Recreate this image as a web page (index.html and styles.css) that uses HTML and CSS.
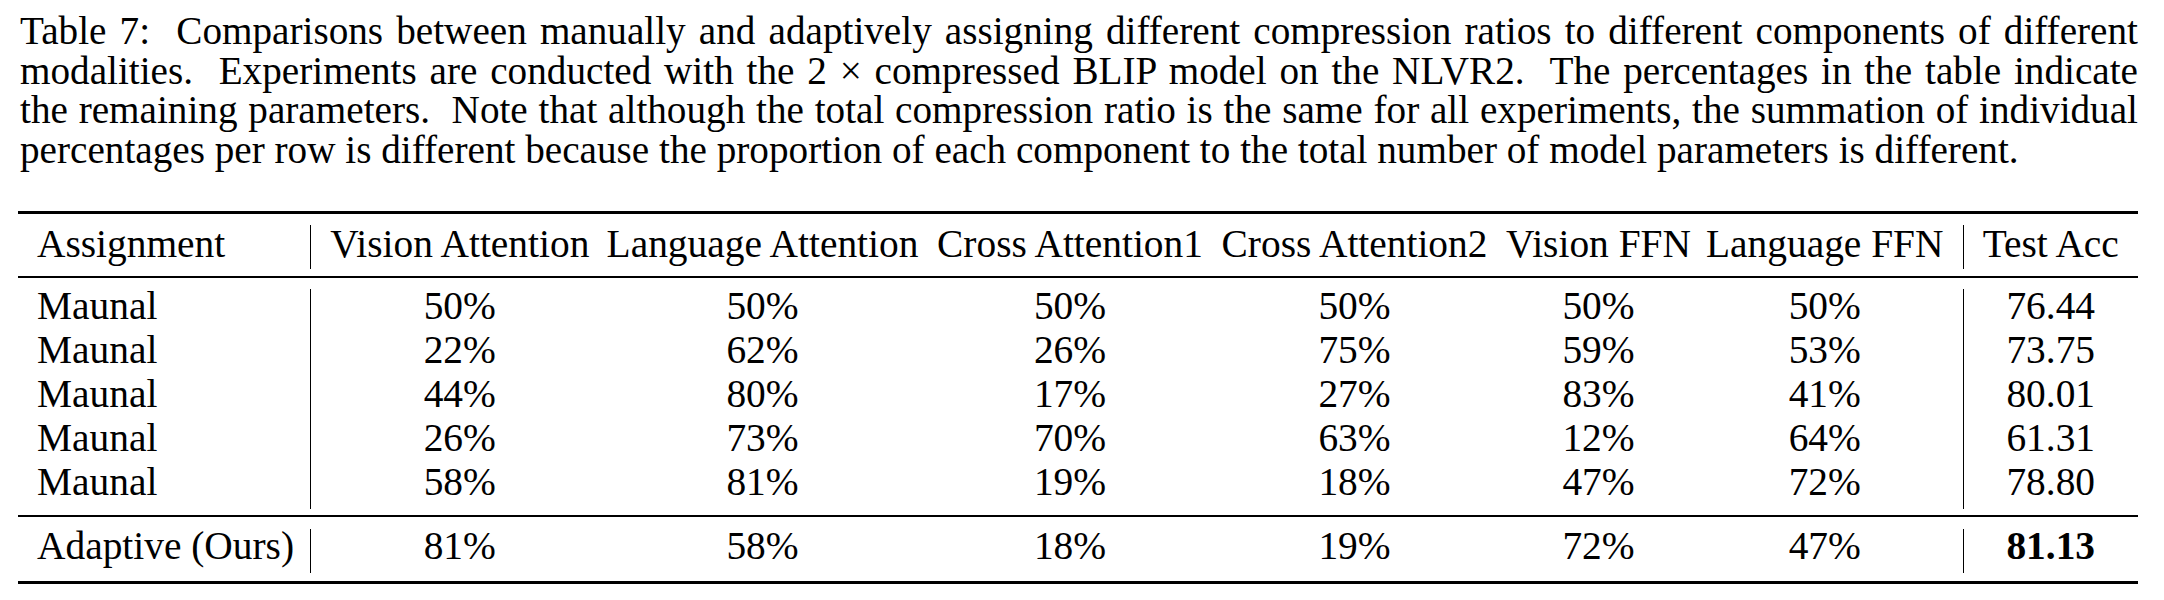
FILE: index.html
```html
<!DOCTYPE html>
<html>
<head>
<meta charset="utf-8">
<link rel="stylesheet" href="styles.css">
</head>
<body>
<div class="page">
  <p class="caption">
    <span class="line just">Table 7:&nbsp; Comparisons between manually and adaptively assigning different compression ratios to different components of different</span>
    <span class="line just">modalities.&nbsp; Experiments are conducted with the 2 × compressed BLIP model on the NLVR2.&nbsp; The percentages in the table indicate</span>
    <span class="line just">the remaining parameters.&nbsp; Note that although the total compression ratio is the same for all experiments, the summation of individual</span>
    <span class="line">percentages per row is different because the proportion of each component to the total number of model parameters is different.</span>
  </p>
  <table class="results">
    <colgroup>
      <col class="c0"><col class="c1"><col class="c2"><col class="c3"><col class="c4"><col class="c5"><col class="c6"><col class="c7">
    </colgroup>
    <tbody>
      <tr class="rule heavy"><td colspan="8"></td></tr>
      <tr class="gap g-top"><td colspan="8"></td></tr>
      <tr class="row head">
        <td class="name">Assignment</td>
        <td class="v1 bar">Vision Attention</td>
        <td>Language Attention</td>
        <td>Cross Attention1</td>
        <td>Cross Attention2</td>
        <td>Vision FFN</td>
        <td class="v6">Language FFN</td>
        <td class="bar">Test Acc</td>
      </tr>
      <tr class="gap g-above"><td colspan="8"></td></tr>
      <tr class="rule mid"><td colspan="8"></td></tr>
      <tr class="gap g-below"><td colspan="8"></td></tr>
      <tr class="row">
        <td class="name">Maunal</td><td class="v1 bar">50%</td><td>50%</td><td>50%</td><td>50%</td><td>50%</td><td class="v6">50%</td><td class="bar">76.44</td>
      </tr>
      <tr class="row">
        <td class="name">Maunal</td><td class="v1 bar">22%</td><td>62%</td><td>26%</td><td>75%</td><td>59%</td><td class="v6">53%</td><td class="bar">73.75</td>
      </tr>
      <tr class="row">
        <td class="name">Maunal</td><td class="v1 bar">44%</td><td>80%</td><td>17%</td><td>27%</td><td>83%</td><td class="v6">41%</td><td class="bar">80.01</td>
      </tr>
      <tr class="row">
        <td class="name">Maunal</td><td class="v1 bar">26%</td><td>73%</td><td>70%</td><td>63%</td><td>12%</td><td class="v6">64%</td><td class="bar">61.31</td>
      </tr>
      <tr class="row">
        <td class="name">Maunal</td><td class="v1 bar">58%</td><td>81%</td><td>19%</td><td>18%</td><td>47%</td><td class="v6">72%</td><td class="bar">78.80</td>
      </tr>
      <tr class="gap g-above2"><td colspan="8"></td></tr>
      <tr class="rule mid"><td colspan="8"></td></tr>
      <tr class="gap g-below"><td colspan="8"></td></tr>
      <tr class="row">
        <td class="name">Adaptive (Ours)</td><td class="v1 bar">81%</td><td>58%</td><td>18%</td><td>19%</td><td>72%</td><td class="v6">47%</td><td class="bar best">81.13</td>
      </tr>
      <tr class="gap g-end"><td colspan="8"></td></tr>
      <tr class="rule heavy"><td colspan="8"></td></tr>
    </tbody>
  </table>
</div>
</body>
</html>
```

FILE: styles.css
```css
html, body {
  margin: 0;
  padding: 0;
  background: #ffffff;
}

.page {
  width: 2164px;
  color: #000000;
  font-family: "Liberation Serif", "Times New Roman", serif;
}

.caption {
  margin: 11px 0 0 20px;
  width: 2118px;
  font-size: 39.2px;
  line-height: 39.6px;
}

.caption .line {
  display: block;
  white-space: nowrap;
}

.caption .line.just {
  white-space: normal;
  text-align: justify;
  text-align-last: justify;
}

.results {
  margin: 41.6px 0 0 18px;
  width: 2120px;
  table-layout: fixed;
  border-collapse: collapse;
  border-spacing: 0;
  font-size: 39.4px;
}

.c0 { width: 292px; }
.c1 { width: 287px; }
.c2 { width: 331px; }
.c3 { width: 284px; }
.c4 { width: 285px; }
.c5 { width: 203px; }
.c6 { width: 263px; }
.c7 { width: 175px; }

.results td {
  padding: 0;
  text-align: center;
  white-space: nowrap;
  vertical-align: top;
}

.results .row td {
  height: 35px;
  line-height: 35px;
  padding-bottom: 9px;
}

.results .row.head td {
  padding-top: 2px;
  padding-bottom: 7px;
}

.results td.name {
  text-align: left;
  padding-left: 19px;
}

.results td.v1 {
  padding-left: 12px;
}

.results td.v6 {
  padding-right: 13px;
}

.results td.bar {
  border-left: 1.4px solid #000000;
}

.results td.best {
  font-weight: bold;
}

.rule td {
  padding: 0;
  background: #000000;
}

.rule.heavy td {
  height: 3.5px;
}

.rule.mid td {
  height: 2px;
}

.gap td {
  padding: 0;
}

.gap.g-top td { height: 10.5px; }
.gap.g-above td { height: 7px; }
.gap.g-above2 td { height: 6px; }
.gap.g-below td { height: 11.5px; }
.gap.g-end td { height: 8px; }
```
